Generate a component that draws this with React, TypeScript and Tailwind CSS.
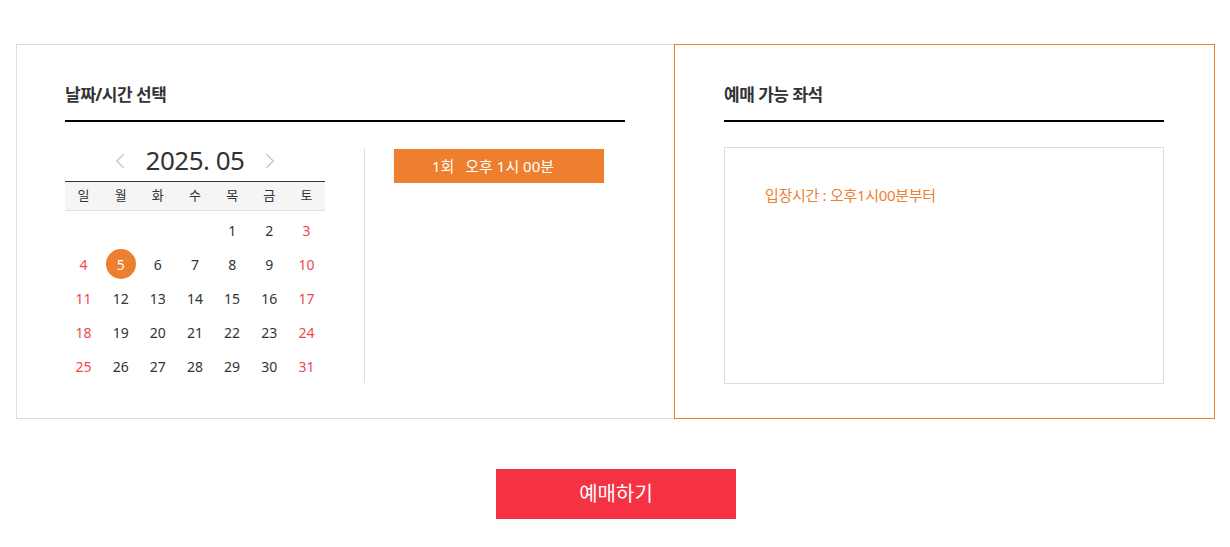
import { ChevronLeft, ChevronRight } from "lucide-react";

const weekDays = ["일", "월", "화", "수", "목", "금", "토"];

// 2025년 5월: 1일이 목요일
const cells: (number | null)[] = [null, null, null, null, ...Array.from({ length: 31 }, (_, i) => i + 1)];

export default function App() {
  return (
    <div className="min-h-screen bg-white pt-[44px]" style={{ fontFamily: '"Noto Sans", "Noto Sans CJK KR", sans-serif' }}>
      <div className="ml-[16px] flex w-[1199px]">
        {/* 날짜/시간 선택 */}
        <section className="w-[658px] border-y border-l border-[#dddddd] pl-[48px] pr-[49px] pt-[38px] pb-[35px]">
          <h2 className="border-b-2 border-black pb-[13px] text-[17px] font-bold leading-[24px] tracking-[-0.5px] text-[#333333]">날짜/시간 선택</h2>
          <div className="mt-[22px] flex items-start">
            <div className="w-[260px]">
              <div className="mb-[4px] flex h-[33px] items-center justify-center gap-[13px] text-[#333333]">
                <ChevronLeft className="h-[26px] w-[26px] text-[#c4c4c4]" strokeWidth={1.1} />
                <span className="text-[26px] font-normal leading-[33px] tracking-[-0.5px]">2025. 05</span>
                <ChevronRight className="h-[26px] w-[26px] text-[#c4c4c4]" strokeWidth={1.1} />
              </div>
              <div className="grid h-[30px] grid-cols-7 items-center border-t border-b border-t-[#333333] border-b-[#e2e2e2] bg-[#f5f5f5] text-center text-[13px] text-[#333333]">
                {weekDays.map((d) => (
                  <span key={d}>{d}</span>
                ))}
              </div>
              <div className="grid grid-cols-7 pt-[2px] text-center text-[14px]">
                {cells.map((day, idx) => {
                  const col = idx % 7;
                  const red = col === 0 || col === 6;
                  return (
                    <div key={idx} className="flex h-[34px] items-center justify-center">
                      {day === 5 ? (
                        <span className="flex h-[30px] w-[30px] items-center justify-center rounded-full bg-[#ed7f2f] text-white">5</span>
                      ) : (
                        <span className={red ? "text-[#f2484b]" : "text-[#333333]"}>{day ?? ""}</span>
                      )}
                    </div>
                  );
                })}
              </div>
            </div>
            <div className="ml-[39px] mt-[4px] h-[235px] w-px bg-[#dddddd]" />
            <button className="ml-[29px] mt-[5px] flex h-[34px] w-[210px] items-center justify-center gap-[11px] pr-[12px] bg-[#ed7f2f] text-[15px] text-white">
              <span>1회</span>
              <span>오후 1시 00분</span>
            </button>
          </div>
        </section>

        {/* 예매 가능 좌석 */}
        <section className="w-[541px] border border-[#ed7f2f] px-[49px] pt-[38px] pb-[34px]">
          <h2 className="w-[440px] border-b-2 border-black pb-[13px] text-[17px] font-bold leading-[24px] tracking-[-0.5px] text-[#333333]">예매 가능 좌석</h2>
          <div className="mt-[25px] h-[237px] w-[440px] border border-[#dddddd] px-[40px] pt-[37px]">
            <p className="text-[15px] leading-[20px] tracking-[-0.3px] text-[#ed7f2f]">입장시간 : 오후1시00분부터</p>
          </div>
        </section>
      </div>

      <div className="mt-[50px] flex justify-center">
        <button className="ml-[2px] h-[50px] w-[240px] bg-[#f53144] text-[20px] text-white">예매하기</button>
      </div>
    </div>
  );
}
